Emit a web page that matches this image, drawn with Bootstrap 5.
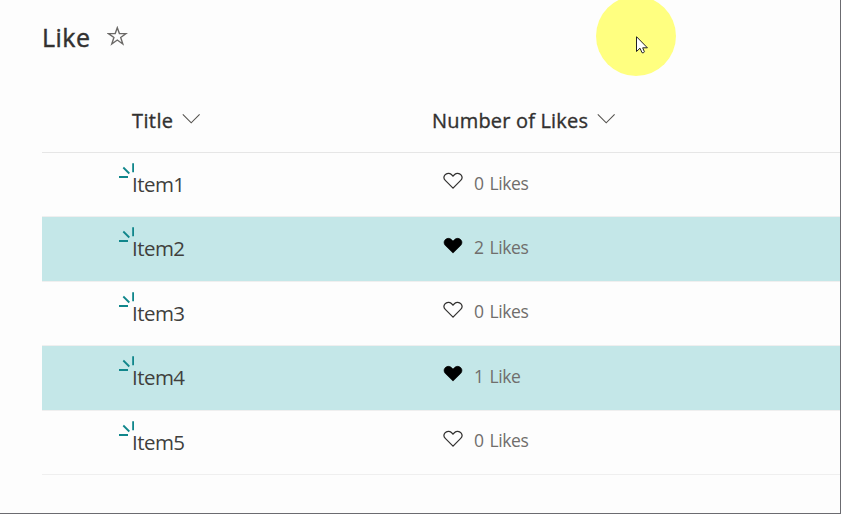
<!DOCTYPE html>
<html lang="en">
<head>
<meta charset="utf-8">
<meta name="viewport" content="width=device-width, initial-scale=1">
<title>Like</title>
<link href="https://cdn.jsdelivr.net/npm/bootstrap@5.3.0/dist/css/bootstrap.min.css" rel="stylesheet">
<style>
body{font-family:"Segoe UI","Open Sans","Noto Sans",sans-serif;background:#fdfdfd;color:#323130}
.screen{width:841px;height:514px;border-right:1px solid #6b6b70;border-bottom:1px solid #6b6b70}
.page-head{height:88px;padding:20px 0 0 42px}
.page-title{font-size:25px;font-weight:400;line-height:34px;width:49px;letter-spacing:.5px;-webkit-text-stroke:.45px #323130}
.star{margin:6px 0 0 16px}
.list{margin-left:42px}
.list-head{height:65px;border-bottom:1px solid #e6e6e6;font-size:20px;line-height:64px;letter-spacing:.18px;-webkit-text-stroke:.35px #323130}
.list-head span{padding-top:2px}
.col-name{letter-spacing:.4px}
.list-line{height:64.4px;border-bottom:1px solid #efefef}
.liked{background:#c4e7e8}
.cell-title{width:390px;padding-left:90px}
.chevron{margin:-2px 0 0 9px}
.item-name{font-size:20.5px;line-height:63px;letter-spacing:-.55px;color:#403f3d}
.spark{left:76px;top:10px}
.heart{margin:-7px 0 0 11px}
.count{font-size:17.5px;color:#706e6c;line-height:59.6px;height:62px;margin-left:11px;letter-spacing:-.42px;word-spacing:1.8px}
.pointer-halo{width:80px;height:80px;left:596px;top:-4px;background:#ffff80}
.pointer{left:636px;top:36px}
</style>
</head>
<body>
<svg class="d-none" xmlns="http://www.w3.org/2000/svg">
<symbol id="chevron" viewBox="0 0 18 12"><path d="M.8 1.3 9.2 9.8 17.6 1.3" fill="none" stroke="#55534f" stroke-width="1.1"/></symbol>
<symbol id="spark" viewBox="0 0 18 18"><path d="M15.1 .2V9.2M5.3 4.5 11.3 10.5M1 14H10" fill="none" stroke="#10868b" stroke-width="1.8"/></symbol>
<symbol id="heart" viewBox="0 0 20 18"><path d="M10 16.1 2.3 8.4C.8 6.9.6 4.6 2 2.9 3.7.9 6.6.8 8.4 2.5L10 4.1 11.6 2.5C13.4.8 16.3.9 18 2.9 19.4 4.6 19.2 6.9 17.7 8.4Z"/></symbol>
</svg>
<main class="screen position-relative overflow-hidden">
  <header class="page-head d-flex align-items-start">
    <h1 class="page-title m-0 text-nowrap">Like</h1>
    <svg class="star" width="21" height="20" viewBox="0 0 21 20"><path d="M10.3 1.7 12.4 7.6H19.1L13.7 11.5 15.8 18 10.3 14 4.8 18 6.9 11.5 1.5 7.6H8.2Z" fill="none" stroke="#6b6967" stroke-width="1.4"/></svg>
  </header>
  <section class="list">
    <div class="list-head d-flex">
      <div class="cell-title d-flex align-items-center"><span class="col-name">Title</span><svg class="chevron" width="18" height="12"><use href="#chevron"/></svg></div>
      <div class="d-flex align-items-center"><span>Number of Likes</span><svg class="chevron" width="18" height="12"><use href="#chevron"/></svg></div>
    </div>
    <div class="list-line d-flex position-relative">
      <svg class="spark position-absolute" width="18" height="18"><use href="#spark"/></svg>
      <div class="cell-title item-name">Item1</div>
      <div class="d-flex align-items-center"><svg class="heart" width="20" height="18" fill="none" stroke="#323130" stroke-width="1.2"><use href="#heart"/></svg><span class="count">0 Likes</span></div>
    </div>
    <div class="list-line liked d-flex position-relative">
      <svg class="spark position-absolute" width="18" height="18"><use href="#spark"/></svg>
      <div class="cell-title item-name">Item2</div>
      <div class="d-flex align-items-center"><svg class="heart" width="20" height="18" fill="#000" stroke="#000" stroke-width=".6"><use href="#heart"/></svg><span class="count">2 Likes</span></div>
    </div>
    <div class="list-line d-flex position-relative">
      <svg class="spark position-absolute" width="18" height="18"><use href="#spark"/></svg>
      <div class="cell-title item-name">Item3</div>
      <div class="d-flex align-items-center"><svg class="heart" width="20" height="18" fill="none" stroke="#323130" stroke-width="1.2"><use href="#heart"/></svg><span class="count">0 Likes</span></div>
    </div>
    <div class="list-line liked d-flex position-relative">
      <svg class="spark position-absolute" width="18" height="18"><use href="#spark"/></svg>
      <div class="cell-title item-name">Item4</div>
      <div class="d-flex align-items-center"><svg class="heart" width="20" height="18" fill="#000" stroke="#000" stroke-width=".6"><use href="#heart"/></svg><span class="count">1 Like</span></div>
    </div>
    <div class="list-line d-flex position-relative">
      <svg class="spark position-absolute" width="18" height="18"><use href="#spark"/></svg>
      <div class="cell-title item-name">Item5</div>
      <div class="d-flex align-items-center"><svg class="heart" width="20" height="18" fill="none" stroke="#323130" stroke-width="1.2"><use href="#heart"/></svg><span class="count">0 Likes</span></div>
    </div>
  </section>
  <div class="pointer-halo position-absolute rounded-circle"></div>
  <svg class="pointer position-absolute" width="13" height="19" viewBox="0 0 13 19"><path d="M.5.7V15.5L4 12.2 6 16.7Q7.5 17.5 8.4 15.8L6.7 11.8H11.4Z" fill="#fff" stroke="#222" stroke-width="1"/></svg>
</main>
<script src="https://cdn.jsdelivr.net/npm/bootstrap@5.3.0/dist/js/bootstrap.bundle.min.js"></script>
</body>
</html>
